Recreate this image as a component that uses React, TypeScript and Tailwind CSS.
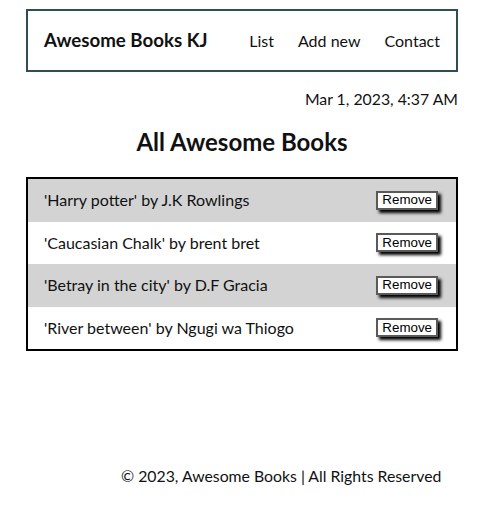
import React from "react";

const books = [
  { title: "Harry potter", author: "J.K Rowlings" },
  { title: "Caucasian Chalk", author: "brent bret" },
  { title: "Betray in the city", author: "D.F Gracia" },
  { title: "River between", author: "Ngugi wa Thiogo" },
];

export default function App() {
  return (
    <div
      className="w-[493px] min-h-[508px] bg-white text-[#111]"
      style={{ fontFamily: "Lato, 'Open Sans', sans-serif" }}
    >
      <div className="ml-[26px] w-[432px] pt-[9px]">
        <nav className="flex h-[63px] items-center justify-between border-2 border-[#2f4f4f] pl-[16px] pr-[16px]">
          <span className="text-[18.7px] font-bold">Awesome Books KJ</span>
          <ul className="flex items-center gap-[24px] text-[16px]">
            <li>List</li>
            <li>Add new</li>
            <li>Contact</li>
          </ul>
        </nav>
        <p className="mt-[17px] text-right text-[15.8px] leading-[19px]">Mar 1, 2023, 4:37 AM</p>
        <h1 className="mt-[19px] text-center text-[24px] font-bold leading-[29px]">All Awesome Books</h1>
        <div className="mt-[21px] border-2 border-black">
          {books.map((b, i) => (
            <div
              key={i}
              className={`flex h-[42.5px] items-center justify-between pl-[16px] pr-[18px] text-[16px] ${
                i % 2 === 0 ? "bg-[#d3d3d3]" : "bg-white"
              }`}
            >
              <span>
                '{b.title}' by {b.author}
              </span>
              <button
                className="h-[19px] border-2 border-[#5a5a5a] bg-white px-[4px] text-[13.33px] leading-[14px] text-black shadow-[3px_3px_3px_#000]"
                style={{ fontFamily: "'Liberation Sans', Arial, sans-serif" }}
              >
                Remove
              </button>
            </div>
          ))}
        </div>
      </div>
      <footer className="mt-[115px] pl-[121px] text-[15.8px] leading-[19px]">
        © 2023, Awesome Books | All Rights Reserved
      </footer>
    </div>
  );
}
